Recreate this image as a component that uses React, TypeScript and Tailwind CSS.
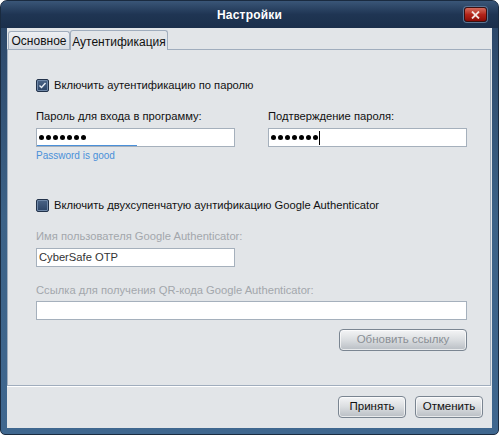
import React from 'react';

const font = { fontFamily: '"Liberation Sans", Arial, sans-serif' };

function Checkbox({ checked }: { checked: boolean }) {
    return (
        <div className="w-[13px] h-[13px] rounded-[2px] border border-[#22324a] bg-gradient-to-b from-[#4b6487] to-[#2c4466] flex items-center justify-center shadow-[inset_0_0_0_1px_#6f88a8]">
            {checked && (
                <svg width="9" height="9" viewBox="0 0 9 9">
                    <path d="M1.5 4.5 L3.5 6.5 L7.5 2" stroke="#e6ecf4" strokeWidth="1.4" fill="none" />
                </svg>
            )}
        </div>
    );
}

function AeroButton({ label, disabled = false, className = '' }: { label: string; disabled?: boolean; className?: string }) {
    return (
        <div
            className={`h-[22px] rounded-[4px] border border-[#7a8591] bg-gradient-to-b from-[#f4f5f6] via-[#dadde0] to-[#b9bec4] shadow-[inset_0_0_0_1px_#ffffffaa] flex items-center justify-center text-[11.5px] ${disabled ? 'text-[#8a8f95]' : 'text-[#111]'} ${className}`}
        >
            {label}
        </div>
    );
}

function Dots() {
    return (
        <div className="flex gap-[2px] items-center">
            {[0, 1, 2, 3, 4, 5, 6].map((i) => (
                <div key={i} className="w-[5px] h-[5px] rounded-full bg-black" />
            ))}
        </div>
    );
}

export default function App() {
    return (
        <div className="w-[499px] h-[435px] bg-white" style={font}>
            <div className="w-[499px] h-[435px] rounded-t-[7px] rounded-b-[5px] bg-gradient-to-b from-[#2b4566] via-[#3c6287] to-[#3f678f] flex flex-col border border-[#1a2b40]">
                {/* Title bar */}
                <div className="h-[27px] relative flex items-center justify-center bg-gradient-to-b from-[#3a5678] via-[#1f3553] to-[#1b2f4b] rounded-t-[6px]">
                    <span className="text-white font-bold text-[12px] tracking-[0.2px]">Настройки</span>
                    <div className="absolute right-[11px] top-[6px] w-[23px] h-[15px] rounded-[3px] border border-[#3b1010] bg-gradient-to-b from-[#d46a5c] via-[#b3241a] to-[#8c0c06] flex items-center justify-center shadow-[0_0_0_1px_#5c7594]">
                        <svg width="9" height="8" viewBox="0 0 9 8">
                            <path d="M1 0.5 L8 7.5 M8 0.5 L1 7.5" stroke="#f3e3e0" strokeWidth="1.8" />
                        </svg>
                    </div>
                </div>

                {/* Client area */}
                <div className="flex-1 mx-[6px] mb-[6px] bg-[#e2e5e8] flex flex-col">
                    {/* Tabs */}
                    <div className="flex items-end h-[21px] pl-[1px] pt-[2px]">
                        <div className="h-[18px] w-[62px] border border-b-0 border-[#a0adbd] rounded-t-[3px] bg-gradient-to-b from-[#eef0f3] to-[#d6dbe2] text-[12px] text-[#111] flex items-center justify-center">
                            Основное
                        </div>
                        <div className="h-[20px] w-[98px] border border-b-0 border-[#a0adbd] rounded-t-[3px] bg-[#e2e5e8] text-[12px] text-[#111] flex items-start justify-center pt-[2px] -mb-[1px] relative z-10">
                            Аутентификация
                        </div>
                    </div>

                    {/* Tab panel */}
                    <div className="h-[337px] mr-[1px] border border-[#a0adbd] flex flex-col pl-[28px] pr-[20px] text-[11.2px] text-[#111]">
                        <div className="flex items-center gap-[5px] mt-[28px] h-[14px]">
                            <Checkbox checked />
                            <span>Включить аутентификацию по паролю</span>
                        </div>

                        <div className="flex gap-[33px] mt-[17px]">
                            <div className="flex flex-col w-[199px] shrink-0">
                                <span className="h-[15px] leading-[15px]">Пароль для входа в программу:</span>
                                <div className="mt-[4px] h-[19px] border border-[#a5b0bc] bg-white flex items-center pl-[2px] relative">
                                    <Dots />
                                    <div className="absolute left-0 bottom-0 w-[100px] h-[1px] bg-[#4a90d9]" />
                                </div>
                                <span className="text-[10px] text-[#4a90d9] mt-[3px] leading-[12px]">Password is good</span>
                            </div>
                            <div className="flex flex-col w-[199px] shrink-0">
                                <span className="h-[15px] leading-[15px]">Подтверждение пароля:</span>
                                <div className="mt-[4px] h-[19px] border border-[#a5b0bc] bg-white flex items-center pl-[2px] gap-[1px]">
                                    <Dots />
                                    <span className="w-[1px] h-[14px] bg-black" />
                                </div>
                            </div>
                        </div>

                        <div className="flex items-center gap-[5px] mt-[36px] h-[14px]">
                            <Checkbox checked={false} />
                            <span>Включить двухсупенчатую аунтификацию Google Authenticator</span>
                        </div>

                        <span className="mt-[17px] h-[15px] leading-[15px] text-[#a3a7ac]">Имя пользователя Google Authenticator:</span>
                        <div className="mt-[4px] w-[199px] h-[19px] border border-[#a5b0bc] bg-white flex items-center pl-[2px]">
                            <span className="text-[#333]">CyberSafe OTP</span>
                        </div>

                        <span className="mt-[16px] h-[15px] leading-[15px] text-[#a3a7ac]">Ссылка для получения QR-кода Google Authenticator:</span>
                        <div className="mt-[3px] w-[431px] h-[19px] border border-[#a5b0bc] bg-white" />

                        <div className="flex justify-end mt-[9px] w-[431px]">
                            <AeroButton label="Обновить ссылку" disabled className="w-[128px]" />
                        </div>
                    </div>

                    <div className="h-px bg-white mr-[1px]" />

                    {/* Footer buttons */}
                    <div className="flex justify-end gap-[9px] pr-[9px] mt-[9px]">
                        <AeroButton label="Принять" className="w-[68px]" />
                        <AeroButton label="Отменить" className="w-[68px]" />
                    </div>
                </div>
            </div>
        </div>
    );
}
